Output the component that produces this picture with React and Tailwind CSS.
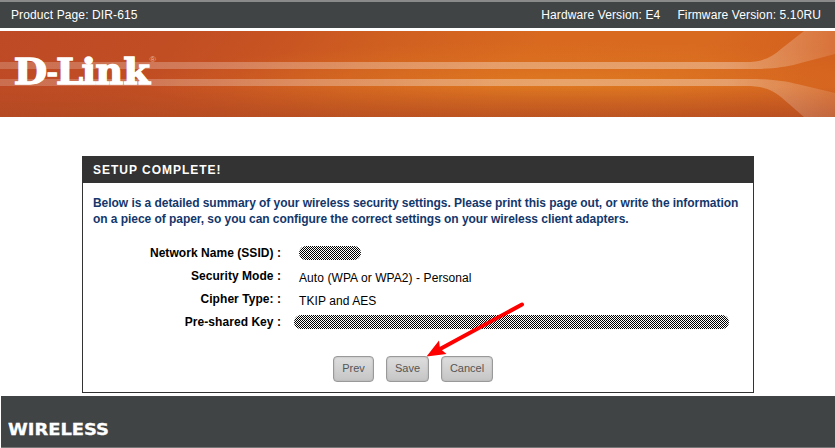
import React from 'react';

const rows = [
  { label: 'Network Name (SSID) :', masked: 'ssid' },
  { label: 'Security Mode :', value: 'Auto (WPA or WPA2) - Personal' },
  { label: 'Cipher Type: :', value: 'TKIP and AES' },
  { label: 'Pre-shared Key :', masked: 'key' },
];

const buttons = [
  { label: 'Prev', width: 'w-[41px]' },
  { label: 'Save', width: 'w-[43px]' },
  { label: 'Cancel', width: 'w-[52px]' },
];

const Mask = ({ type }) => (
  <div
    className={`h-[14px] rounded-full bg-[conic-gradient(#000_25%,#fff_0_50%,#000_0_75%,#fff_0)] bg-[length:2px_2px] ${
      type === 'ssid' ? 'ml-[18px] w-[62px]' : 'ml-[13px] w-[435px]'
    }`}
  />
);

const Banner = () => (
  <div className="relative h-[86px] overflow-hidden bg-[#cf6020]">
    <svg className="absolute inset-0" width="835" height="86" viewBox="0 0 835 86">
      <defs>
        <linearGradient id="base" x1="0" x2="1" y1="0" y2="0.08">
          <stop offset="0" stopColor="#bd4a25" />
          <stop offset="0.2" stopColor="#c04d23" />
          <stop offset="0.33" stopColor="#c75322" />
          <stop offset="0.48" stopColor="#d06020" />
          <stop offset="0.65" stopColor="#d8691f" />
          <stop offset="0.85" stopColor="#d86a20" />
          <stop offset="1" stopColor="#d3601f" />
        </linearGradient>
        <radialGradient id="glow" cx="0.68" cy="0.62" r="0.5">
          <stop offset="0" stopColor="#e08022" stopOpacity="0.65" />
          <stop offset="0.5" stopColor="#e07c22" stopOpacity="0.3" />
          <stop offset="1" stopColor="#e07a20" stopOpacity="0" />
        </radialGradient>
        <linearGradient id="shade" x1="0" x2="0" y1="0" y2="1">
          <stop offset="0.65" stopColor="#b04a22" stopOpacity="0" />
          <stop offset="1" stopColor="#b04a22" stopOpacity="0.7" />
        </linearGradient>
        <linearGradient id="band" gradientUnits="userSpaceOnUse" x1="0" x2="835" y1="0" y2="0">
          <stop offset="0" stopColor="#fff" stopOpacity="0.2" />
          <stop offset="0.6" stopColor="#fff" stopOpacity="0.33" />
          <stop offset="0.87" stopColor="#fff" stopOpacity="0.33" />
          <stop offset="1" stopColor="#fff" stopOpacity="0.12" />
        </linearGradient>
      </defs>
      <rect width="835" height="86" fill="url(#base)" />
      <rect width="835" height="86" fill="url(#glow)" />
      <rect width="835" height="86" fill="url(#shade)" />
      <path
        d="M0 31H745C762 31 771 27 781 18L804 0H835V23L797 33C785 36 773 38 750 38H0Z"
        fill="url(#band)"
      />
      <path
        d="M0 48H750C773 48 785 50 797 53L835 62V86H804L781 66C771 58 762 55 745 55H0Z"
        fill="url(#band)"
      />
      <text
        y="53"
        transform="scale(1.1 1)"
        fill="#fff"
        stroke="#fff"
        strokeWidth="1.300"
        fontFamily="DejaVu Serif, serif"
        fontWeight="700"
        fontSize="35"
      >
        <tspan x="12.500">D</tspan>
        <tspan x="42.500" y="50" fontSize="24">-</tspan>
        <tspan x="51 74 86.500 112" y="53">Link</tspan>
        <tspan x="136" y="31.500" fill="#e8b9a5" stroke="none" fontFamily="Liberation Sans, sans-serif" fontWeight="400" fontSize="8">®</tspan>
      </text>
    </svg>
  </div>
);

const Arrow = () => (
  <svg className="absolute left-[341px] top-[143px]" width="106" height="60" viewBox="0 0 106 60">
    <path d="M98 4.500L17 48.500" stroke="#f00" strokeWidth="4" strokeLinecap="round" />
    <path d="M2.500 56.500L15 40.500L16 48.500L22.500 54Z" fill="#f00" />
  </svg>
);

export default function App() {
  return (
    <div className="flex h-[448px] w-[835px] flex-col overflow-hidden bg-white font-['Liberation_Sans',sans-serif] text-[12px] text-black">
      <header className="mb-[3px] flex h-[28px] shrink-0 items-center justify-between border-t-2 border-[#8a8a8a] bg-[#404444] pl-[11px] pr-[14px] tracking-[0.12px] text-white">
        <span>Product Page: DIR-615</span>
        <div className="flex gap-[17px]">
          <span>Hardware Version: E4</span>
          <span>Firmware Version: 5.10RU</span>
        </div>
      </header>

      <Banner />

      <main className="relative ml-[82px] mt-[39px] h-[237px] w-[672px] shrink-0 border border-[#333]">
        <h1 className="flex h-[26px] items-center bg-[#333] pl-[10px] font-bold tracking-[0.98px] text-white">
          SETUP COMPLETE!
        </h1>
        <p className="mt-[12px] whitespace-nowrap pl-[10px] font-bold leading-[16px] tracking-[-0.048px] text-[#13376b]">
          Below is a detailed summary of your wireless security settings. Please print this page out, or write the information
          <br />
          on a piece of paper, so you can configure the correct settings on your wireless client adapters.
        </p>

        <div className="mt-[14px]">
          {rows.map((row) => (
            <div key={row.label} className="flex h-[23px] items-center">
              <div className="w-[198px] text-right font-bold tracking-[0.05px]">{row.label}</div>
              {row.masked ? (
                <Mask type={row.masked} />
              ) : (
                <div className="ml-[18px] pt-[4px] tracking-[0.08px]">{row.value}</div>
              )}
            </div>
          ))}
        </div>

        <div className="ml-[250px] mt-[23px] flex gap-[12px]">
          {buttons.map((button) => (
            <button
              key={button.label}
              className={`h-[26px] rounded-[4px] border border-[#999] bg-linear-to-b from-[#dedede] to-[#c5c5c5] pb-px text-[11px] text-[#555] shadow-[inset_0_0_2px_#aaa] ${button.width}`}
            >
              {button.label}
            </button>
          ))}
        </div>
        <Arrow />
      </main>

      <footer className="ml-px mt-[3px] flex h-[52px] shrink-0 items-end border-b border-[#777] bg-[#404444]">
        <svg width="120" height="30" viewBox="0 0 120 30">
          <text
            x="7"
            y="18"
            fill="#fff"
            stroke="#fff"
            strokeWidth="0.300"
            fontFamily="DejaVu Sans, sans-serif"
            fontWeight="700"
            fontSize="16"
            textLength="101"
            lengthAdjust="spacingAndGlyphs"
          >
            WIRELESS
          </text>
        </svg>
      </footer>
    </div>
  );
}
